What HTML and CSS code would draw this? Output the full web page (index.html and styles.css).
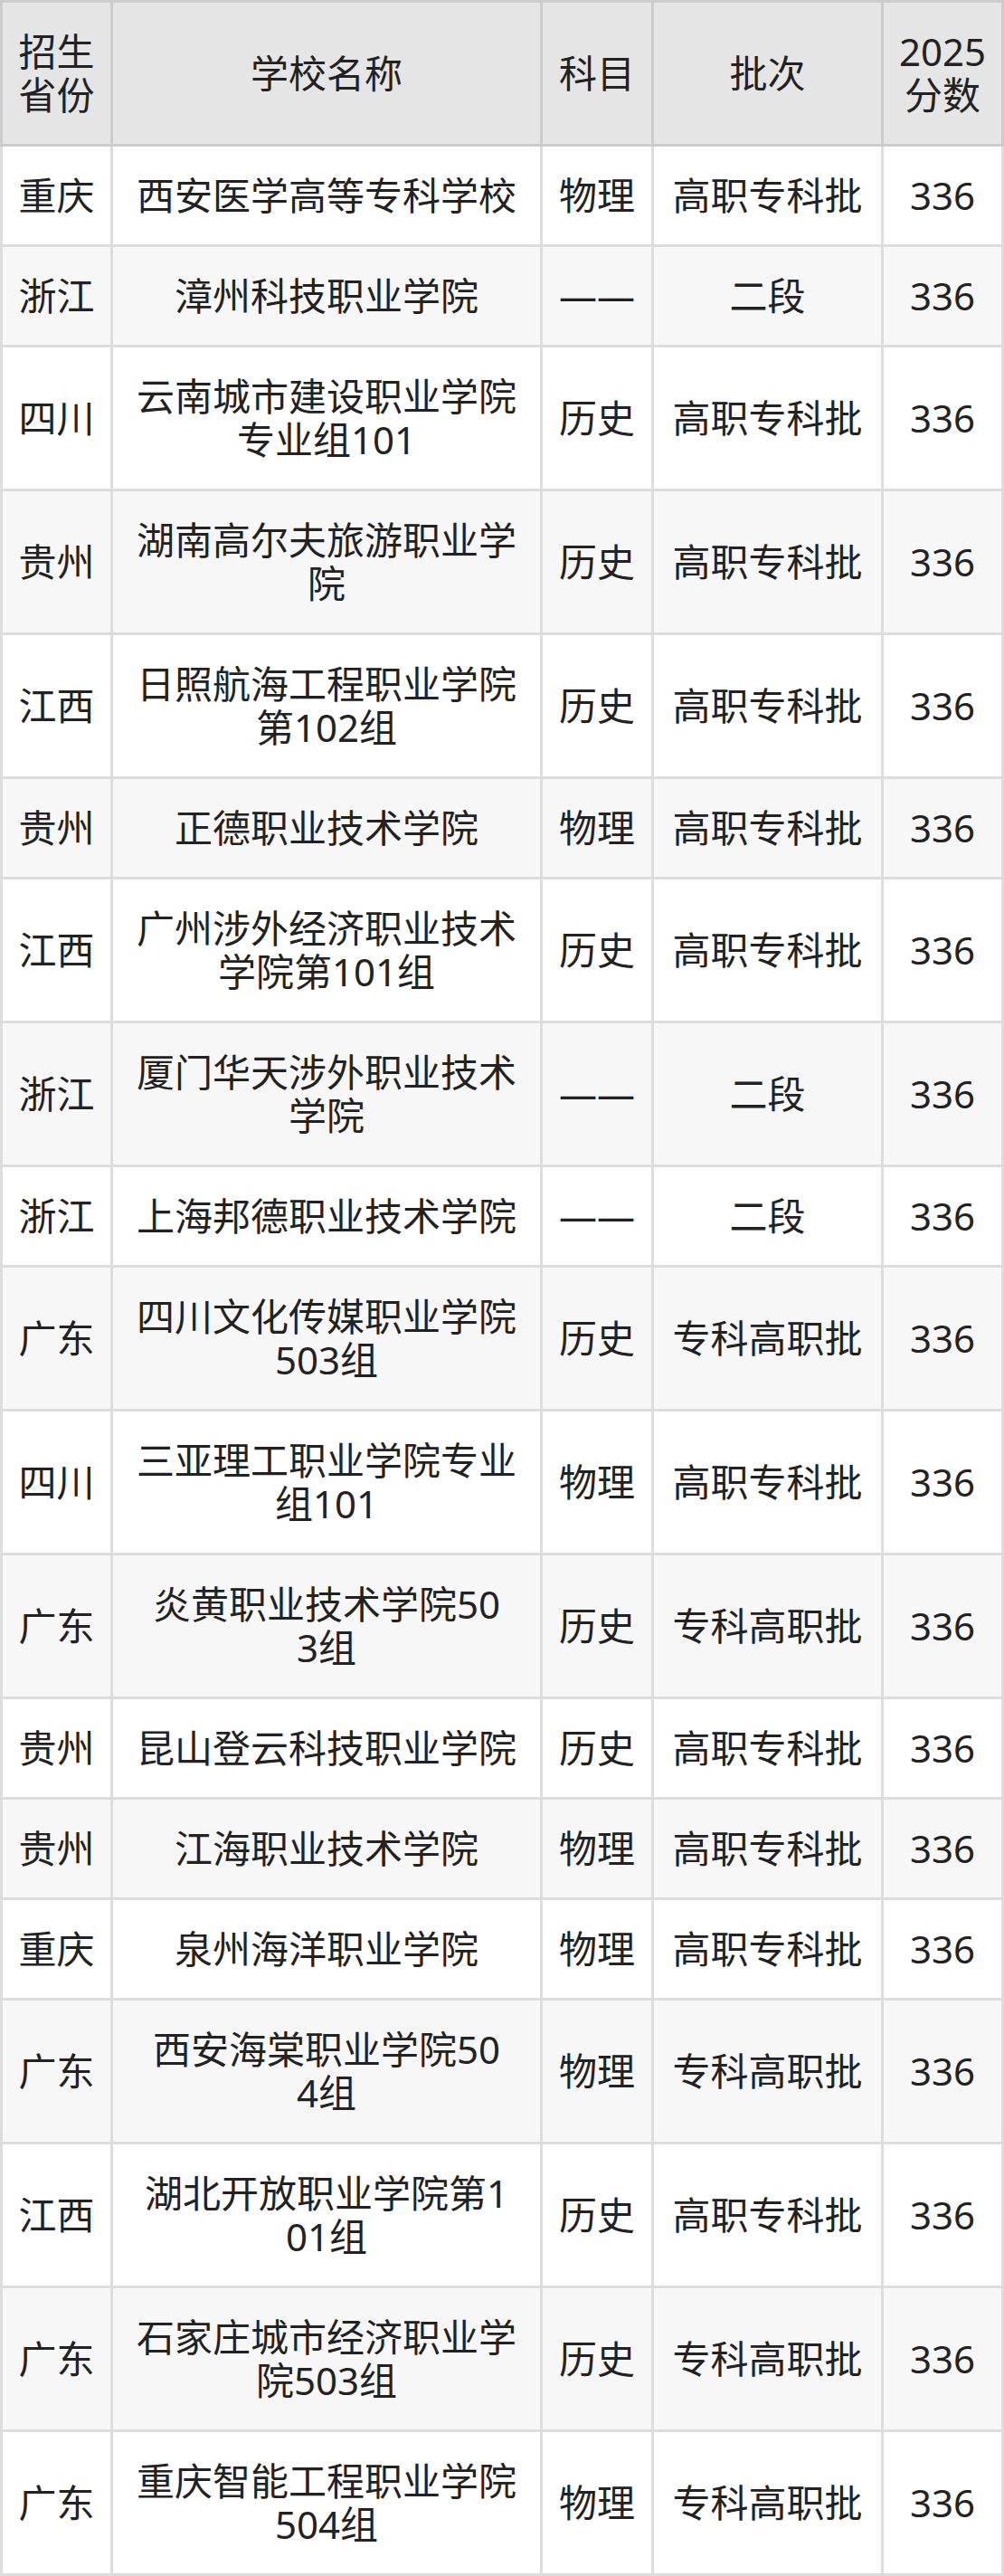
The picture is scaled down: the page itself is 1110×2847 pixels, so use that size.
FILE: index.html
```html
<!DOCTYPE html>
<html lang="zh-CN">
<head>
<meta charset="utf-8">
<title>2025 分数</title>
<link rel="stylesheet" href="styles.css">
</head>
<body>
<div class="table" role="table">
  <div class="row head" role="row">
    <div class="cell" role="columnheader">招生<br>省份</div>
    <div class="cell" role="columnheader">学校名称</div>
    <div class="cell" role="columnheader">科目</div>
    <div class="cell" role="columnheader">批次</div>
    <div class="cell" role="columnheader">2025<br>分数</div>
  </div>
  <div class="row" role="row"><div class="cell">重庆</div><div class="cell">西安医学高等专科学校</div><div class="cell">物理</div><div class="cell">高职专科批</div><div class="cell">336</div></div>
  <div class="row" role="row"><div class="cell">浙江</div><div class="cell">漳州科技职业学院</div><div class="cell"><span class="dash">——</span></div><div class="cell">二段</div><div class="cell">336</div></div>
  <div class="row" role="row"><div class="cell">四川</div><div class="cell">云南城市建设职业学院<br>专业组101</div><div class="cell">历史</div><div class="cell">高职专科批</div><div class="cell">336</div></div>
  <div class="row" role="row"><div class="cell">贵州</div><div class="cell">湖南高尔夫旅游职业学<br>院</div><div class="cell">历史</div><div class="cell">高职专科批</div><div class="cell">336</div></div>
  <div class="row" role="row"><div class="cell">江西</div><div class="cell">日照航海工程职业学院<br>第102组</div><div class="cell">历史</div><div class="cell">高职专科批</div><div class="cell">336</div></div>
  <div class="row" role="row"><div class="cell">贵州</div><div class="cell">正德职业技术学院</div><div class="cell">物理</div><div class="cell">高职专科批</div><div class="cell">336</div></div>
  <div class="row" role="row"><div class="cell">江西</div><div class="cell">广州涉外经济职业技术<br>学院第101组</div><div class="cell">历史</div><div class="cell">高职专科批</div><div class="cell">336</div></div>
  <div class="row" role="row"><div class="cell">浙江</div><div class="cell">厦门华天涉外职业技术<br>学院</div><div class="cell"><span class="dash">——</span></div><div class="cell">二段</div><div class="cell">336</div></div>
  <div class="row" role="row"><div class="cell">浙江</div><div class="cell">上海邦德职业技术学院</div><div class="cell"><span class="dash">——</span></div><div class="cell">二段</div><div class="cell">336</div></div>
  <div class="row" role="row"><div class="cell">广东</div><div class="cell">四川文化传媒职业学院<br>503组</div><div class="cell">历史</div><div class="cell">专科高职批</div><div class="cell">336</div></div>
  <div class="row" role="row"><div class="cell">四川</div><div class="cell">三亚理工职业学院专业<br>组101</div><div class="cell">物理</div><div class="cell">高职专科批</div><div class="cell">336</div></div>
  <div class="row" role="row"><div class="cell">广东</div><div class="cell">炎黄职业技术学院50<br>3组</div><div class="cell">历史</div><div class="cell">专科高职批</div><div class="cell">336</div></div>
  <div class="row" role="row"><div class="cell">贵州</div><div class="cell">昆山登云科技职业学院</div><div class="cell">历史</div><div class="cell">高职专科批</div><div class="cell">336</div></div>
  <div class="row" role="row"><div class="cell">贵州</div><div class="cell">江海职业技术学院</div><div class="cell">物理</div><div class="cell">高职专科批</div><div class="cell">336</div></div>
  <div class="row" role="row"><div class="cell">重庆</div><div class="cell">泉州海洋职业学院</div><div class="cell">物理</div><div class="cell">高职专科批</div><div class="cell">336</div></div>
  <div class="row" role="row"><div class="cell">广东</div><div class="cell">西安海棠职业学院50<br>4组</div><div class="cell">物理</div><div class="cell">专科高职批</div><div class="cell">336</div></div>
  <div class="row" role="row"><div class="cell">江西</div><div class="cell">湖北开放职业学院第1<br>01组</div><div class="cell">历史</div><div class="cell">高职专科批</div><div class="cell">336</div></div>
  <div class="row" role="row"><div class="cell">广东</div><div class="cell">石家庄城市经济职业学<br>院503组</div><div class="cell">历史</div><div class="cell">专科高职批</div><div class="cell">336</div></div>
  <div class="row" role="row"><div class="cell">广东</div><div class="cell">重庆智能工程职业学院<br>504组</div><div class="cell">物理</div><div class="cell">专科高职批</div><div class="cell">336</div></div>
</div>
</body>
</html>
```
FILE: styles.css
```css
* {
  box-sizing: border-box;
}

html, body {
  margin: 0;
  padding: 0;
  background: #ffffff;
}

.table {
  display: grid;
  grid-template-columns: 125px 475px 123px 254px 133px;
  width: 1110px;
  font-family: "Noto Sans", "Noto Sans CJK SC", sans-serif;
  font-size: 42px;
  line-height: 48px;
  color: #222222;
}

.row {
  display: contents;
}

.cell {
  display: flex;
  flex-wrap: wrap;
  align-items: center;
  align-content: center;
  justify-content: center;
  text-align: center;
  padding: 30px 4px;
  border-right: 3px solid #dddddd;
  border-bottom: 3px solid #dddddd;
  background: #ffffff;
  white-space: nowrap;
}

.cell:first-child {
  border-left: 3px solid #dddddd;
}

.row:nth-child(odd) .cell {
  background: #f7f7f7;
}

.dash {
  letter-spacing: 0;
}

.head .cell {
  background: #e5e5e5;
  border-color: #cccccc;
  border-top: 3px solid #cccccc;
}

.row.head .cell {
  background: #e5e5e5;
}
```
